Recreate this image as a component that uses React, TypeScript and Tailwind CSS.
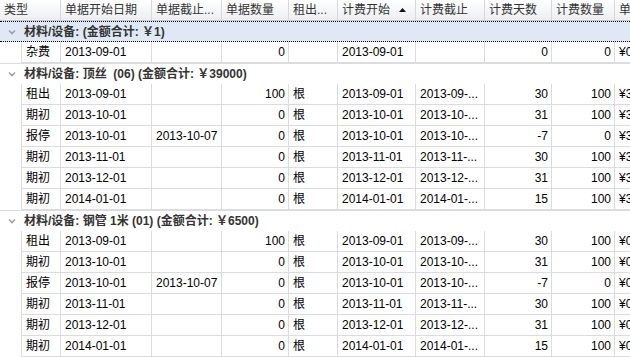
import React from 'react';

const font = { fontFamily: '"Liberation Sans", "Noto Sans CJK SC", sans-serif' };

interface Col {
  label: string;
  w: number;
  align?: 'right';
  sort?: boolean;
}

const cols: Col[] = [
  { label: '类型', w: 61 },
  { label: '单据开始日期', w: 91 },
  { label: '单据截止...', w: 70 },
  { label: '单据数量', w: 67, align: 'right' },
  { label: '租出...', w: 49 },
  { label: '计费开始', w: 78, sort: true },
  { label: '计费截止', w: 69 },
  { label: '计费天数', w: 67, align: 'right' },
  { label: '计费数量', w: 63, align: 'right' },
  { label: '单', w: 60 },
];

type Row = string[];

interface Group {
  title: string;
  selected?: boolean;
  rows: Row[];
}

const groups: Group[] = [
  {
    title: '材料/设备: (金额合计: ￥1)',
    selected: true,
    rows: [['杂费', '2013-09-01', '', '0', '', '2013-09-01', '', '0', '0', '¥0']],
  },
  {
    title: '材料/设备: 顶丝  (06) (金额合计: ￥39000)',
    rows: [
      ['租出', '2013-09-01', '', '100', '根', '2013-09-01', '2013-09-...', '30', '100', '¥3'],
      ['期初', '2013-10-01', '', '0', '根', '2013-10-01', '2013-10-...', '31', '100', '¥3'],
      ['报停', '2013-10-01', '2013-10-07', '0', '根', '2013-10-01', '2013-10-...', '-7', '0', '¥3'],
      ['期初', '2013-11-01', '', '0', '根', '2013-11-01', '2013-11-...', '30', '100', '¥3'],
      ['期初', '2013-12-01', '', '0', '根', '2013-12-01', '2013-12-...', '31', '100', '¥3'],
      ['期初', '2014-01-01', '', '0', '根', '2014-01-01', '2014-01-...', '15', '100', '¥3'],
    ],
  },
  {
    title: '材料/设备: 钢管 1米 (01) (金额合计: ￥6500)',
    rows: [
      ['租出', '2013-09-01', '', '100', '根', '2013-09-01', '2013-09-...', '30', '100', '¥0'],
      ['期初', '2013-10-01', '', '0', '根', '2013-10-01', '2013-10-...', '31', '100', '¥0'],
      ['报停', '2013-10-01', '2013-10-07', '0', '根', '2013-10-01', '2013-10-...', '-7', '0', '¥0'],
      ['期初', '2013-11-01', '', '0', '根', '2013-11-01', '2013-11-...', '30', '100', '¥0'],
      ['期初', '2013-12-01', '', '0', '根', '2013-12-01', '2013-12-...', '31', '100', '¥0'],
      ['期初', '2014-01-01', '', '0', '根', '2014-01-01', '2014-01-...', '15', '100', '¥0'],
    ],
  },
];

function Chevron() {
  return (
    <svg width="8" height="6" viewBox="0 0 8 6" className="shrink-0">
      <path d="M1 1.5 L4 4.5 L7 1.5" fill="none" stroke="#9aa0a8" strokeWidth="1.6" />
    </svg>
  );
}

function Header() {
  return (
    <div className="flex h-[21px] border-b border-[#c9ccd2] bg-gradient-to-b from-white to-[#eceef2] text-[#333]">
      {cols.map((c, i) => (
        <div
          key={i}
          style={{ width: c.w }}
          className="relative flex shrink-0 items-center border-r border-[#d5d8dd] pl-1 whitespace-nowrap overflow-hidden"
        >
          {c.label}
          {c.sort && (
            <svg width="7" height="4" viewBox="0 0 7 4" className="absolute right-[9px] top-[8px]">
              <path d="M0 4 L3.5 0 L7 4 Z" fill="#111" />
            </svg>
          )}
        </div>
      ))}
    </div>
  );
}

function GroupRow({ g, first }: { g: Group; first: boolean }) {
  return (
    <div
      className={
        g.selected
          ? 'flex h-[21px] items-center gap-[8px] border-y border-dotted border-black bg-[#dfe8f4] pl-[8px]'
          : `flex h-[21px] items-center gap-[8px] pl-[8px] ${first ? '' : 'border-t border-[#dadce0]'}`
      }
    >
      <Chevron />
      <span className="font-bold text-[#333] whitespace-pre">{g.title}</span>
    </div>
  );
}

function DataRow({ r }: { r: Row }) {
  return (
    <div className="flex h-[21px]">
      <div className="w-[22px] shrink-0 border-r border-[#dadce0]" />
      {cols.map((c, i) => (
        <div
          key={i}
          style={{ width: i === 0 ? c.w - 22 : c.w }}
          className={`flex shrink-0 items-center overflow-hidden whitespace-nowrap border-r border-b border-[#dadce0] pl-[4px] pr-[3px] text-black ${
            c.align ? 'justify-end' : ''
          }`}
        >
          {r[i]}
        </div>
      ))}
    </div>
  );
}

export default function App() {
  return (
    <div className="h-[357px] w-[630px] overflow-hidden bg-white text-[12px]" style={font}>
      <Header />
      {groups.map((g, gi) => (
        <div key={gi}>
          <GroupRow g={g} first={gi === 0} />
          {g.rows.map((r, ri) => (
            <DataRow key={ri} r={r} />
          ))}
        </div>
      ))}
    </div>
  );
}
